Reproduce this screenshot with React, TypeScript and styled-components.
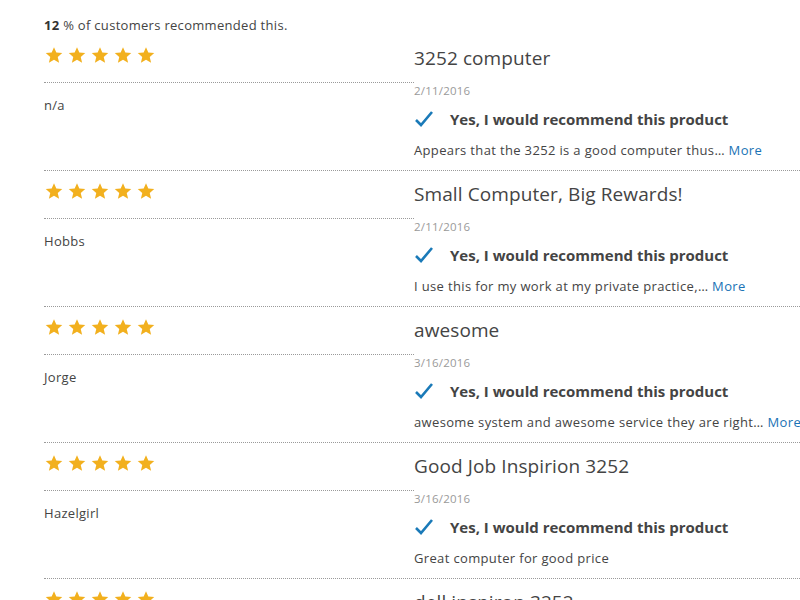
import React from "react";
import styled, { createGlobalStyle } from "styled-components";

const GlobalStyle = createGlobalStyle`
  html, body {
    margin: 0;
    padding: 0;
    background: #ffffff;
    overflow: hidden;
  }
  body {
    font-family: "Open Sans", "DejaVu Sans", sans-serif;
    color: #333333;
  }
`;

const Page = styled.div`
  padding: 15px 0 0 44px;
  width: 900px;
`;

const Summary = styled.div`
  font-size: 13px;
  line-height: 20px;
  letter-spacing: 0.3px;
  color: #444;
  b {
    font-weight: 700;
    color: #333;
  }
`;

const Review = styled.div<{ $first?: boolean }>`
  display: grid;
  grid-template-columns: 370px 1fr;
  padding: 10px 0;
  border-top: ${(p) => (p.$first ? "none" : "1px dotted #9a9a9a")};
`;

const Left = styled.div`
  display: flex;
  flex-direction: column;
`;

const Stars = styled.div`
  display: flex;
  gap: 5px;
  height: 36px;
  padding-top: 1px;
  padding-left: 1px;
  border-bottom: 1px dotted #9a9a9a;
`;

const Author = styled.div`
  margin-top: 12px;
  font-size: 13px;
  line-height: 20px;
  letter-spacing: 0.3px;
  color: #444;
`;

const Right = styled.div`
  display: flex;
  flex-direction: column;
  white-space: nowrap;
`;

const Title = styled.div`
  font-size: 19px;
  line-height: 26px;
  letter-spacing: 0.1px;
  color: #444;
`;

const DateText = styled.div`
  margin-top: 10px;
  font-size: 11.5px;
  line-height: 20px;
  letter-spacing: 0.2px;
  color: #9a9a9a;
`;

const Recommend = styled.div`
  margin-top: 6px;
  display: flex;
  align-items: center;
  gap: 16px;
  height: 24px;
  font-size: 15px;
  font-weight: 700;
  color: #444;
`;

const Body = styled.div`
  margin-top: 9px;
  font-size: 13px;
  line-height: 20px;
  letter-spacing: 0.35px;
  color: #444;
`;

const More = styled.span`
  color: #1a73b5;
`;

const Star = () => (
  <svg width="18" height="18" viewBox="0 0 24 24">
    <path
      d="M12 1.5l3.1 7.2 7.9.7-6 5.2 1.8 7.7L12 18.2l-6.8 4.1L7 14.6 1 9.4l7.9-.7z"
      fill="#f2b01e"
    />
  </svg>
);

const Check = () => (
  <svg width="20" height="18" viewBox="0 0 20 18">
    <path d="M2 10l5 5L18 2" fill="none" stroke="#1a7ab8" strokeWidth="2.6" strokeLinecap="butt" />
  </svg>
);

type R = { title: string; date: string; name: string; body: string; more: boolean };

const reviews: R[] = [
  { title: "3252 computer", date: "2/11/2016", name: "n/a", body: "Appears that the 3252 is a good computer thus\u2026", more: true },
  { title: "Small Computer, Big Rewards!", date: "2/11/2016", name: "Hobbs", body: "I use this for my work at my private practice,\u2026", more: true },
  { title: "awesome", date: "3/16/2016", name: "Jorge", body: "awesome system and awesome service they are right\u2026", more: true },
  { title: "Good Job Inspirion 3252", date: "3/16/2016", name: "Hazelgirl", body: "Great computer for good price", more: false },
  { title: "dell inspiron 3252", date: "3/16/2016", name: "n/a", body: "Good computer", more: false },
];

export default function App() {
  return (
    <>
      <GlobalStyle />
      <Page>
        <Summary>
          <b>12</b> % of customers recommended this.
        </Summary>
        {reviews.map((r, i) => (
          <Review key={i} $first={i === 0}>
            <Left>
              <Stars>
                {[0, 1, 2, 3, 4].map((s) => (
                  <Star key={s} />
                ))}
              </Stars>
              <Author>{r.name}</Author>
            </Left>
            <Right>
              <Title>{r.title}</Title>
              <DateText>{r.date}</DateText>
              <Recommend>
                <Check />
                <span>Yes, I would recommend this product</span>
              </Recommend>
              <Body>
                {r.body}
                {r.more && <More> More</More>}
              </Body>
            </Right>
          </Review>
        ))}
      </Page>
    </>
  );
}
